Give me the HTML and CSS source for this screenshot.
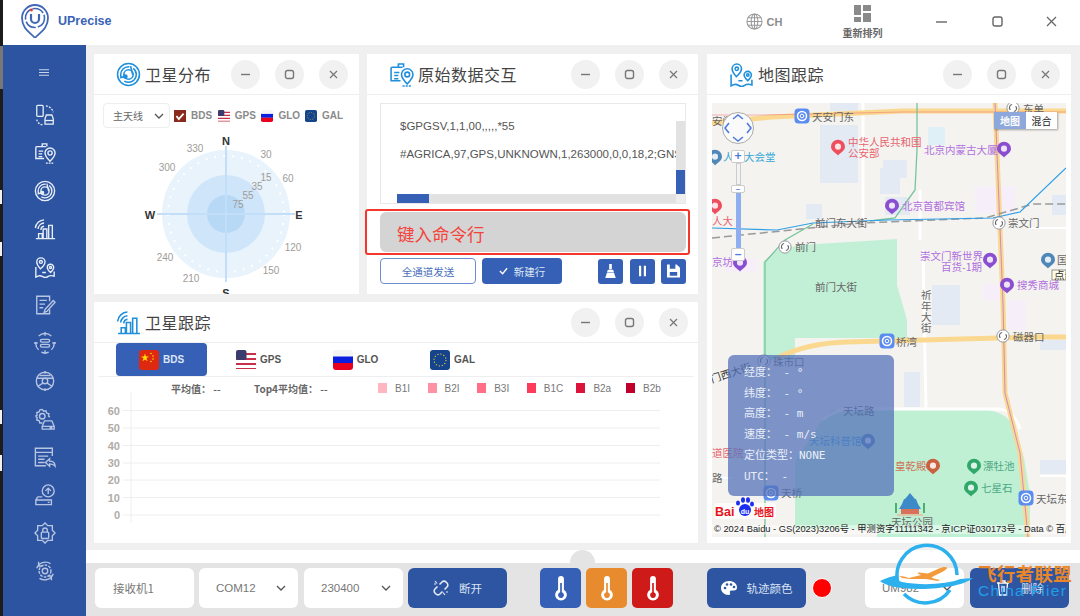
FILE: index.html
```html
<!DOCTYPE html>
<html lang="zh-CN">
<head>
<meta charset="utf-8">
<title>UPrecise</title>
<link rel="stylesheet" href="styles.css">
</head>
<body>
<svg class="defs" width="0" height="0" aria-hidden="true">
  <symbol id="i-car" viewBox="0 0 24 24"><g fill="none" stroke="currentColor" stroke-width="1.4"><rect x="3" y="1.5" width="7" height="12" rx="1"/><path d="M13 2c4 .6 7 3.500 8 7M3 17c.6 3 3 5.500 7 6" stroke-dasharray="2 1.500"/><path d="M12 16l1.500-4h6l1.500 4v6H12z"/><path d="M12 18h9"/></g></symbol>
  <symbol id="i-doc" viewBox="0 0 24 24"><g fill="none" stroke="currentColor" stroke-width="1.5"><path d="M9 5V2h5v3M13 5H3a1 1 0 0 0-1 1v12h9"/><path d="M5 10h5M5 13h4M5 16h4"/><path d="M17.500 21c-3-3-5.500-5.500-5.500-9a5.500 5.500 0 0 1 11 0c0 3.500-2.500 6-5.500 9z"/><circle cx="17.500" cy="12" r="2.300"/><path d="M13 23h9" stroke-dasharray="2 1"/></g></symbol>
  <symbol id="i-radar" viewBox="0 0 24 24"><g fill="none" stroke="currentColor" stroke-width="1.500"><circle cx="12" cy="12" r="10.500"/><circle cx="12" cy="12" r="7.500" stroke-dasharray="16 4"/><circle cx="12" cy="12" r="4.500"/><circle cx="9" cy="14" r="1.500" fill="currentColor"/><path d="M4 15l5-1M14 4l2 8"/></g></symbol>
  <symbol id="i-signal" viewBox="0 0 24 24"><g fill="none" stroke="currentColor" stroke-width="1.500"><path d="M1.500 11A10 10 0 0 1 11 2M4.500 12A7 7 0 0 1 11 5.500M7.500 13A4 4 0 0 1 11 9"/><path d="M5 22v-5h4v5M10 22V12h4v10M16 22V8h4v14M2 22.500h21"/></g></symbol>
  <symbol id="i-map" viewBox="0 0 24 24"><g fill="none" stroke="currentColor" stroke-width="1.500"><path d="M7 14C4.500 11 3 9.500 3 6.500a4.500 4.500 0 0 1 9 0c0 3-1.500 4.500-5 7.500z"/><circle cx="7.500" cy="6.500" r="1.600"/><path d="M18 18c-2-2-3.500-3.500-3.500-5.500a3.500 3.500 0 0 1 7 0c0 2-1.500 3.500-3.500 5.500z"/><circle cx="18" cy="12.500" r="1.200"/><path d="M2 12v11c3-2 5-2 7-.7s4 1.700 6 .2 4-1.500 7-.5V17M9 18h4" /></g></symbol>
  <symbol id="i-edit" viewBox="0 0 24 24"><g fill="none" stroke="currentColor" stroke-width="1.500"><path d="M17 8V2.500H3v19h14V17"/><path d="M6 7h8M6 11h6M6 15h4"/><path d="M12 17l9-10 2 2-9 10-3 1z"/></g></symbol>
  <symbol id="i-target" viewBox="0 0 24 24"><g fill="none" stroke="currentColor" stroke-width="1.500"><path d="M5 4.500A10 10 0 0 1 19 4.500M22 11a10 10 0 0 1-3 8.500M5 19.500A10 10 0 0 1 2 11M8 22a10 10 0 0 0 8 0" /><path d="M12 0v4M12 20v4M0 12h4M20 12h4"/><rect x="7" y="8" width="10" height="3" rx="1.500"/><rect x="7" y="13.500" width="10" height="3" rx="1.500"/></g></symbol>
  <symbol id="i-wheel" viewBox="0 0 24 24"><g fill="none" stroke="currentColor" stroke-width="1.500"><circle cx="12" cy="12" r="9.500"/><circle cx="12" cy="12" r="3"/><path d="M3 9h18M4 18l6-4M20 18l-6-4M12 1v3M12 20v3"/><path d="M6 6h12"/></g></symbol>
  <symbol id="i-gear" viewBox="0 0 24 24"><g fill="none" stroke="currentColor" stroke-width="1.500"><circle cx="9" cy="9" r="3"/><path d="M9 1.500l1.500 2 2.500-.5.800 2.500 2.500.8-.5 2.500 1.500 1.200M1.500 9l2-1.500L3 5l2.500-.8L6.500 2 9 1.500M1.500 9l2 1.500L3 13l2.500.8.8 2.500h3"/><path d="M9 23v-3l2.500-6h8l2.500 6v3zM9 20h13M17 21.500h3"/></g></symbol>
  <symbol id="i-win" viewBox="0 0 24 24"><g fill="none" stroke="currentColor" stroke-width="1.500"><path d="M20 11V2.500H1.500v19H13"/><path d="M1.500 7h18M4.500 11h11M4.500 14.500h7M4.500 18h7"/><path d="M23 22c0-3.500-2.500-5.500-6-5.500V14l-4.500 4 4.500 4v-2.500c2.500 0 4.500.5 6 2.500z"/></g></symbol>
  <symbol id="i-up" viewBox="0 0 24 24"><g fill="none" stroke="currentColor" stroke-width="1.500"><circle cx="15.500" cy="7.500" r="6.500"/><path d="M15.500 11V4.500M12.500 7.500l3-3 3 3"/><path d="M4 14h5M2 17.500l2-3.500M2 17.500h17v5H2zM15 20h2"/></g></symbol>
  <symbol id="i-lock" viewBox="0 0 24 24"><g fill="none" stroke="currentColor" stroke-width="1.500"><path d="M12 1l3 3h5v5l3 3-3 3v5h-5l-3 3-3-3H4v-5l-3-3 3-3V4h5z"/><rect x="8" y="11" width="8" height="7" rx="1"/><path d="M9.500 11V9a2.500 2.500 0 0 1 5 0v2"/></g></symbol>
  <symbol id="i-cycle" viewBox="0 0 24 24"><g fill="none" stroke="currentColor" stroke-width="1.500"><circle cx="12" cy="12" r="3"/><circle cx="12" cy="12" r="6.500" stroke-dasharray="3 1.200"/><path d="M3 9A10 10 0 0 1 18 4M5 2v4.500h4M21 15A10 10 0 0 1 6 20M19 22v-4.500h-4"/></g></symbol>
  <symbol id="f-cn" viewBox="0 0 20 20"><rect width="20" height="20" rx="3" fill="#de2910"/><path d="M6 3.500l1 3h3l-2.500 1.800 1 3L6 9.500l-2.500 1.800 1-3L2 6.500h3z" fill="#ffde00"/><g fill="#ffde00"><circle cx="12" cy="3.500" r=".8"/><circle cx="14" cy="6" r=".8"/><circle cx="14" cy="9" r=".8"/><circle cx="12" cy="11.500" r=".8"/></g></symbol>
  <symbol id="f-us" viewBox="0 0 20 20"><rect width="20" height="20" rx="3" fill="#fff"/><path d="M0 3h20v2H0zM0 8h20v2H0zM0 13h20v2H0zM0 18h20v1H0z" fill="#c8304a"/><rect width="10.500" height="10" rx="2" fill="#3c3b6e"/></symbol>
  <symbol id="f-ru" viewBox="0 0 20 20"><rect width="20" height="20" rx="3" fill="#f4f4f4"/><rect y="6.500" width="20" height="6.500" fill="#0a1ee0"/><path d="M0 13h20v4a3 3 0 0 1-3 3H3a3 3 0 0 1-3-3z" fill="#e8001e"/></symbol>
  <symbol id="f-eu" viewBox="0 0 20 20"><rect width="20" height="20" rx="3" fill="#15438c"/><circle cx="10" cy="10" r="6" fill="none" stroke="#e9c93a" stroke-width="1.100" stroke-dasharray="1.200 1.900"/></symbol>
  <symbol id="f-chk" viewBox="0 0 20 20"><rect width="20" height="20" fill="#8a2a1f"/><path d="M4 10l4 5 8-9" fill="none" stroke="#fff" stroke-width="3"/></symbol>
  <symbol id="pin" viewBox="0 0 16 18"><path d="M8 18C6 15 0 13 0 8a8 8 0 0 1 16 0c0 5-6 7-8 10z" fill="currentColor"/><circle cx="8" cy="8" r="3.500" fill="#fff" fill-opacity=".85"/></symbol>
  <symbol id="sub" viewBox="0 0 16 16"><rect x=".5" y=".5" width="15" height="15" rx="4" fill="#5b8cf0"/><circle cx="8" cy="8" r="4.500" fill="none" stroke="#fff" stroke-width="1.500"/><circle cx="8" cy="8" r="1.800" fill="none" stroke="#fff"/></symbol>
  <symbol id="ring" viewBox="0 0 16 16"><circle cx="8" cy="8" r="7" fill="#fff" stroke="#8b8f98"/><path d="M5 10a3.500 3.500 0 0 1 2-6M11 6a3.500 3.500 0 0 1-2 6" fill="none" stroke="#666" stroke-width="1.300"/></symbol>
  <symbol id="therm" viewBox="0 0 24 32"><path d="M8.500 18V5a3.500 3.500 0 0 1 7 0v13a7 7 0 1 1-7 0z" fill="#fff"/><path d="M11 10h2v11a3.500 3.500 0 1 1-2 0z" fill="currentColor"/></symbol>
</svg>

<div class="edge">
  <span class="edge-grey"></span>
  <span class="edge-mark m1"></span>
  <span class="edge-mark m2"></span>
  <span class="edge-mark m3"></span>
  <span class="edge-mark m4"></span>
</div>

<div class="app">
  <header class="topbar">
    <svg class="logo" viewBox="0 0 28 34"><path d="M14 34C10 29 1 25 1 14a13 13 0 0 1 26 0c0 11-9 15-13 20z" fill="#fff" stroke="#3f68b8" stroke-width="1.800"/><circle cx="14" cy="14" r="9.500" fill="none" stroke="#3f68b8" stroke-width="1.600" stroke-dasharray="12 2"/><path d="M10 10v5a4 4 0 0 0 8 0v-5" fill="none" stroke="#3f68b8" stroke-width="2.200"/><circle cx="10.500" cy="6" r="1.400" fill="#e8342c"/></svg>
    <span class="brand">UPrecise</span>
    <svg class="globe" viewBox="0 0 18 18"><g fill="none" stroke="#999" stroke-width="1.100"><circle cx="9" cy="9" r="8"/><ellipse cx="9" cy="9" rx="3.500" ry="8"/><path d="M1 9h16M2 5h14M2 13h14M9 1v16"/></g></svg>
    <span class="lang">CH</span>
    <div class="arrange">
      <svg class="arrange-icon" viewBox="0 0 17 17"><path d="M0 0h7v10H0zM9 0h8v6H9zM0 12h7v5H0zM9 8h8v9H9z" fill="#8a8a8a"/></svg>
      <span class="arrange-text">重新排列</span>
    </div>
    <svg class="win win-min" viewBox="0 0 11 11"><path d="M0 6h11" stroke="#666" stroke-width="1.400"/></svg>
    <svg class="win win-max" viewBox="0 0 11 11"><rect x="1" y="1" width="9" height="9" rx="2" fill="none" stroke="#666" stroke-width="1.400"/></svg>
    <svg class="win win-close" viewBox="0 0 11 11"><path d="M1 1l9 9M10 1l-9 9" stroke="#666" stroke-width="1.300"/></svg>
  </header>

  <div class="body">
    <nav class="sidebar">
      <svg class="burger" viewBox="0 0 10 7"><path d="M0 .7h10M0 3.500h10M0 6.300h10" stroke="#c8d4ea" stroke-width="1.100"/></svg>
      <div class="nav-list">
        <svg class="nav-i"><use href="#i-car"/></svg>
        <svg class="nav-i"><use href="#i-doc"/></svg>
        <svg class="nav-i"><use href="#i-radar"/></svg>
        <svg class="nav-i"><use href="#i-signal"/></svg>
        <svg class="nav-i"><use href="#i-map"/></svg>
        <svg class="nav-i dim"><use href="#i-edit"/></svg>
        <svg class="nav-i dim"><use href="#i-target"/></svg>
        <svg class="nav-i dim"><use href="#i-wheel"/></svg>
        <svg class="nav-i dim"><use href="#i-gear"/></svg>
        <svg class="nav-i dim"><use href="#i-win"/></svg>
        <svg class="nav-i dim"><use href="#i-up"/></svg>
        <svg class="nav-i dim"><use href="#i-lock"/></svg>
        <svg class="nav-i dim"><use href="#i-cycle"/></svg>
      </div>
    </nav>

    <main class="content">
      <div class="grid">
        <section class="panel">
          <div class="panel-head">
            <svg class="title-icon"><use href="#i-radar"/></svg>
            <h2 class="title">卫星分布</h2>
            <div class="round-group">
              <button class="round"><svg viewBox="0 0 11 11"><path d="M1 5.500h9" stroke="#777" stroke-width="1.400"/></svg></button>
              <button class="round"><svg viewBox="0 0 11 11"><rect x="1.500" y="1.500" width="8" height="8" rx="2" fill="none" stroke="#777" stroke-width="1.400"/></svg></button>
              <button class="round"><svg viewBox="0 0 11 11"><path d="M2 2l7 7M9 2l-7 7" stroke="#777" stroke-width="1.200"/></svg></button>
            </div>
          </div>
          <div class="sky-tools">
            <div class="ant-select"><span>主天线</span><svg class="chev" viewBox="0 0 10 6"><path d="M1 1l4 4 4-4" fill="none" stroke="#555" stroke-width="1.300"/></svg></div>
            <svg class="mini-flag"><use href="#f-chk"/></svg><span class="mini-label">BDS</span>
            <svg class="mini-flag"><use href="#f-us"/></svg><span class="mini-label">GPS</span>
            <svg class="mini-flag"><use href="#f-ru"/></svg><span class="mini-label">GLO</span>
            <svg class="mini-flag"><use href="#f-eu"/></svg><span class="mini-label">GAL</span>
          </div>
          <svg class="sky" viewBox="94 130 265 164">
            <circle cx="226" cy="214" r="64" fill="#e8f3fc"/>
            <circle cx="226" cy="214" r="58" fill="none" stroke="#fff" stroke-width="2" stroke-dasharray="2 7"/>
            <circle cx="226" cy="214" r="39" fill="#cfe5fa"/>
            <circle cx="226" cy="214" r="19" fill="#b8d9f6"/>
            <path d="M226 146v136M157 214h138" stroke="#c2def9" stroke-width="2"/>
            <g class="sky-num">
              <text x="195" y="152">330</text><text x="266" y="158">30</text><text x="167" y="171">300</text><text x="288" y="182">60</text>
              <text x="266" y="181">15</text><text x="257" y="190">35</text><text x="248" y="199">55</text><text x="238" y="208">75</text>
              <text x="293" y="251">120</text><text x="271" y="274">150</text><text x="165" y="261">240</text><text x="191" y="282">210</text>
            </g>
            <g class="sky-dir">
              <text x="226" y="145">N</text><text x="150" y="219">W</text><text x="299" y="219">E</text><text x="226" y="297">S</text>
            </g>
          </svg>
        </section>

        <section class="panel raw-panel">
          <div class="panel-head">
            <svg class="title-icon"><use href="#i-doc"/></svg>
            <h2 class="title">原始数据交互</h2>
            <div class="round-group tight">
              <button class="round"><svg viewBox="0 0 11 11"><path d="M1 5.500h9" stroke="#777" stroke-width="1.400"/></svg></button>
              <button class="round"><svg viewBox="0 0 11 11"><rect x="1.500" y="1.500" width="8" height="8" rx="2" fill="none" stroke="#777" stroke-width="1.400"/></svg></button>
              <button class="round"><svg viewBox="0 0 11 11"><path d="M2 2l7 7M9 2l-7 7" stroke="#777" stroke-width="1.200"/></svg></button>
            </div>
          </div>
          <div class="raw-body">
            <div class="raw-log">
              <p class="raw-line">$GPGSV,1,1,00,,,,,*55</p>
              <p class="raw-line">#AGRICA,97,GPS,UNKNOWN,1,263000,0,0,18,2;GNSS,SINGLE</p>
              <div class="vbar"><span class="vthumb"></span></div>
              <div class="hbar"><span class="hthumb"></span></div>
              <span class="bar-corner"></span>
            </div>
            <div class="cmd">
              <span class="cmd-text">键入命令行</span>
              <span class="cmd-mark"></span>
            </div>
            <div class="raw-actions">
              <button class="btn-outline">全通道发送</button>
              <button class="btn-fill"><svg viewBox="0 0 10 8"><path d="M1 4l3 3 5-6" fill="none" stroke="#fff" stroke-width="1.500"/></svg>新建行</button>
              <div class="icon-btns">
                <button class="btn-ic"><svg viewBox="0 0 14 16"><path d="M5.500 0h3v6h-3zM4 6.500h6l1 3H3zM3 10h8l2 6H1z" fill="#fff"/></svg></button>
                <button class="btn-ic"><svg viewBox="0 0 14 16"><path d="M3 2h2.500v12H3zM8.500 2H11v12H8.500z" fill="#fff"/></svg></button>
                <button class="btn-ic"><svg viewBox="0 0 14 14"><path d="M0 0h10.500L14 3.500V14H0zM3 0v4.500h6V0zM3 8v4h8V8z" fill="#fff"/></svg></button>
              </div>
            </div>
          </div>
        </section>

        <section class="panel map-panel">
          <div class="panel-head">
            <svg class="title-icon"><use href="#i-map"/></svg>
            <h2 class="title">地图跟踪</h2>
            <div class="round-group">
              <button class="round"><svg viewBox="0 0 11 11"><path d="M1 5.500h9" stroke="#777" stroke-width="1.400"/></svg></button>
              <button class="round"><svg viewBox="0 0 11 11"><rect x="1.500" y="1.500" width="8" height="8" rx="2" fill="none" stroke="#777" stroke-width="1.400"/></svg></button>
              <button class="round"><svg viewBox="0 0 11 11"><path d="M2 2l7 7M9 2l-7 7" stroke="#777" stroke-width="1.200"/></svg></button>
            </div>
          </div>
          <div class="map">
            <svg class="map-svg" viewBox="712 103 354 434">
              <rect x="712" y="103" width="354" height="434" fill="#f4f3f0"/>
              <g fill="#e3eaf3">
                <rect x="820" y="125" width="38" height="58"/><rect x="883" y="160" width="24" height="18"/><path d="M880 168h20v26h-20z"/><rect x="928" y="127" width="17" height="18" fill="#dff0f6"/>
                <rect x="806" y="204" width="16" height="15"/><rect x="885" y="197" width="25" height="18"/><rect x="1052" y="195" width="14" height="20"/><rect x="932" y="285" width="28" height="40"/>
                <rect x="904" y="372" width="16" height="35"/><rect x="1040" y="460" width="26" height="14"/><rect x="1040" y="340" width="26" height="10"/>
                <rect x="830" y="103" width="28" height="8"/>
              </g>
              <g fill="#f6eef8">
                <rect x="975" y="186" width="40" height="28"/><rect x="983" y="284" width="20" height="16"/><rect x="1008" y="300" width="18" height="30"/><rect x="725" y="258" width="32" height="14"/>
              </g>
              <path d="M763 262l14-12 24-5 96-6v46l10 35v18H795v22h-32z" fill="#c2f0d6"/>
              <path d="M822 420l10-10h150q24 0 32 18l10 30 6 36v43H877v-8h-82v-68z" fill="#bff0d3"/>
              <g fill="none" stroke="#fff" stroke-linejoin="round">
                <path d="M863 103v117M920 190v50M923 250l3 160" stroke-width="3"/>
                <path d="M925 409h75q14 2 20 20M822 420q14-11 28-11h75" stroke-width="3"/>
                <path d="M1040 476h26M712 478h20" stroke-width="2"/><path d="M1030 228h36" stroke-width="2"/>
              </g>
              <g fill="none" stroke="#fad890" stroke-width="5" stroke-linejoin="round">
                <path d="M712 123l60-6 130-6h164" /><path d="M777 358q30-15 70-16l190-5h29"/>
                <path d="M995 103l8 200 2 90 15 60 8 84"/>
              </g>
              <path d="M995 103l8 200 2 90 15 60 8 84" fill="none" stroke="#cc8cc4" stroke-width="1"/>
              <path d="M712 115l50 0 140-3h164" fill="none" stroke="#ef6f6f" stroke-width="1" stroke-opacity=".5"/>
              <path d="M917 103v47l-2 40-20 28-25 3M813 224l-28 16-20 22v275" fill="none" stroke="#78c49c" stroke-width="1.300"/>
              <path d="M712 238l148-15 125-5 48-14h33" fill="none" stroke="#9a9a9a" stroke-width="1.500" stroke-dasharray="8 4"/>
              <path d="M712 228l65 2 36-7 74-3 106-2 27-6 46-44" fill="none" stroke="#2f9fe6" stroke-width="1.200"/>

              <g class="pin-red"><use href="#pin" x="831" y="139" width="14" height="17"/><use href="#pin" x="708" y="198" width="14" height="17"/></g>
              <g class="pin-purple"><use href="#pin" x="997" y="141" width="14" height="17"/><use href="#pin" x="885" y="198" width="14" height="17"/><use href="#pin" x="733" y="255" width="14" height="17"/><use href="#pin" x="983" y="252" width="14" height="17"/><use href="#pin" x="1000" y="277" width="14" height="17"/></g>
              <g class="pin-blue"><use href="#pin" x="708" y="149" width="14" height="17"/><use href="#pin" x="1041" y="252" width="14" height="17"/><use href="#pin" x="861" y="433" width="14" height="17"/></g>
              <g class="pin-brown"><use href="#pin" x="926" y="458" width="14" height="17"/></g>
              <g class="pin-green"><use href="#pin" x="967" y="458" width="14" height="17"/><use href="#pin" x="964" y="480" width="14" height="17"/></g>

              <use href="#sub" x="794" y="108" width="16" height="16"/><use href="#sub" x="879" y="333" width="16" height="16"/><use href="#sub" x="763" y="485" width="16" height="16"/><use href="#sub" x="1018" y="490" width="16" height="16"/>
              <use href="#ring" x="1006" y="101" width="14" height="14"/><use href="#ring" x="992" y="216" width="14" height="14"/><use href="#ring" x="778" y="240" width="14" height="14"/><use href="#ring" x="996" y="329" width="14" height="14"/><use href="#ring" x="757" y="354" width="14" height="14"/>

              <g class="mt mt-grey">
                <text x="812" y="121">天安门东</text><text x="712" y="125">安门</text><text x="1023" y="113">东单</text>
                <text x="815" y="227">前门东大街</text><text x="1008" y="227">崇文门</text><text x="795" y="251">前门</text><text x="1057" y="264">国</text>
                <text x="815" y="291">前门大街</text><text x="921" y="299">祈</text><text x="921" y="310">年</text><text x="921" y="321">大</text><text x="921" y="332">街</text>
                <text x="896" y="346">桥湾</text><text x="1013" y="341">磁器口</text><text x="773" y="366">珠市口</text>
                <text x="843" y="415">天坛路</text><text x="712" y="482">路</text><text x="781" y="497">天桥</text><text x="1036" y="503">天坛东</text>
                <text x="891" y="526">天坛公园</text>
              </g>
              <g class="mt mt-red"><text x="848" y="146">中华人民共和国</text><text x="848" y="157">公安部</text><text x="712" y="225">人大</text><text x="712" y="457">道医院</text></g>
              <g class="mt mt-purple"><text x="924" y="154">北京内蒙古大厦</text><text x="902" y="210">北京首都宾馆</text><text x="920" y="260">崇文门新世界</text><text x="941" y="271">百货-1期</text><text x="712" y="266">京坊</text><text x="1017" y="289">搜秀商城</text></g>
              <g class="mt mt-teal"><text x="723" y="161">人</text><text x="744" y="161">大会堂</text><text x="809" y="445">天坛科普馆</text></g>
              <g class="mt mt-brown"><text x="895" y="470">皇乾殿</text></g>
              <g class="mt mt-green"><text x="983" y="470">漂牡池</text><text x="981" y="492">七星石</text></g>
              <text class="mt mt-dark" transform="translate(712 383) rotate(-18)">门西大街</text>

              <g>
                <path d="M899 509h22l-3-5h-16zM902 504h16l-2-5h-12zM905 499h10l-5-6z" fill="#3d8ac8"/><rect x="901" y="509" width="18" height="5" fill="#d8705a"/><rect x="897" y="514" width="26" height="2" fill="#d9c9a8"/><path d="M896 503v10M924 503v10" stroke="#4cb06c" stroke-width="2"/>
              </g>

              <rect x="1052" y="270" width="14" height="10" fill="#fffde8" stroke="#555" stroke-width=".6"/><text class="mt mt-dark" x="1054" y="279">点击</text>

              <g class="map-logo">
                <rect x="714" y="503" width="62" height="16" rx="3" fill="#fff" fill-opacity=".75"/>
                <text class="logo-bai" x="715" y="516">Bai</text>
                <circle cx="745" cy="510" r="6" fill="#1c2ff0"/><g fill="#1c2ff0"><ellipse cx="738" cy="503" rx="2" ry="2.500"/><ellipse cx="743" cy="500" rx="2" ry="2.800"/><ellipse cx="748" cy="500" rx="2" ry="2.800"/><ellipse cx="752" cy="504" rx="2" ry="2.500"/></g>
                <text class="logo-du" x="745" y="514">du</text>
                <text class="logo-map" x="754" y="516">地图</text>
              </g>
              <rect x="712" y="525" width="354" height="9" fill="#fff" fill-opacity=".45"/>
              <text class="map-copy" x="714" y="532">© 2024 Baidu - GS(2023)3206号 - 甲测资字11111342 - 京ICP证030173号 - Data © 百度</text>
            </svg>

            <div class="pan"><svg viewBox="0 0 32 32"><circle cx="16" cy="16" r="15.500" fill="#fafafa" stroke="#aaa"/><path d="M11 7l5-4 5 4M11 25l5 4 5-4M7 11l-4 5 4 5M25 11l4 5-4 5" fill="none" stroke="#4f7bdc" stroke-width="1.600"/></svg></div>
            <div class="zoom-ctl">
              <span class="zoom-btn">+</span>
              <span class="zoom-rail"></span>
              <span class="zoom-knob">–</span>
              <span class="zoom-fill"></span>
              <span class="zoom-btn">–</span>
            </div>
            <div class="map-type"><span class="mt-on">地图</span><span class="mt-off">混合</span></div>
            <div class="pos">
              <p>经度： - °</p>
              <p>纬度： - °</p>
              <p>高度： - m</p>
              <p>速度： - m/s</p>
              <p>定位类型：NONE</p>
              <p>UTC： -</p>
            </div>
          </div>
        </section>

        <section class="panel track">
          <div class="panel-head">
            <svg class="title-icon"><use href="#i-signal"/></svg>
            <h2 class="title">卫星跟踪</h2>
            <div class="round-group tight">
              <button class="round"><svg viewBox="0 0 11 11"><path d="M1 5.500h9" stroke="#777" stroke-width="1.400"/></svg></button>
              <button class="round"><svg viewBox="0 0 11 11"><rect x="1.500" y="1.500" width="8" height="8" rx="2" fill="none" stroke="#777" stroke-width="1.400"/></svg></button>
              <button class="round"><svg viewBox="0 0 11 11"><path d="M2 2l7 7M9 2l-7 7" stroke="#777" stroke-width="1.200"/></svg></button>
            </div>
          </div>
          <div class="tabs">
            <div class="tab on"><svg class="tab-flag"><use href="#f-cn"/></svg>BDS</div>
            <div class="tab"><svg class="tab-flag"><use href="#f-us"/></svg>GPS</div>
            <div class="tab"><svg class="tab-flag"><use href="#f-ru"/></svg>GLO</div>
            <div class="tab"><svg class="tab-flag"><use href="#f-eu"/></svg>GAL</div>
          </div>
          <div class="stats">
            <span class="avg">平均值： --</span>
            <span class="top4">Top4平均值： --</span>
            <div class="legend">
              <span class="lg"><i class="sw s1"></i>B1I</span>
              <span class="lg"><i class="sw s2"></i>B2I</span>
              <span class="lg"><i class="sw s3"></i>B3I</span>
              <span class="lg"><i class="sw s4"></i>B1C</span>
              <span class="lg"><i class="sw s5"></i>B2a</span>
              <span class="lg"><i class="sw s6"></i>B2b</span>
            </div>
          </div>
          <svg class="chart" viewBox="94 400 604 143">
            <path d="M131 393v131" stroke="#eee"/>
            <path d="M123 411.500h537M123 429h537M123 446.500h537M123 464h537M123 481h537M123 498.500h537M123 516h537" stroke="#eee"/>
            <g class="axis-num">
              <text x="120" y="416">60</text><text x="120" y="433">50</text><text x="120" y="451">40</text><text x="120" y="468">30</text><text x="120" y="485">20</text><text x="120" y="503">10</text><text x="120" y="520">0</text>
            </g>
          </svg>
        </section>
      </div>

      <div class="strip"><span class="dome"></span></div>

      <footer class="bottom">
        <div class="field f-name">接收机1</div>
        <div class="field f-sel">COM12<svg class="chev" viewBox="0 0 10 6"><path d="M1 1l4 4 4-4" fill="none" stroke="#555" stroke-width="1.300"/></svg></div>
        <div class="field f-sel f-baud">230400<svg class="chev" viewBox="0 0 10 6"><path d="M1 1l4 4 4-4" fill="none" stroke="#555" stroke-width="1.300"/></svg></div>
        <button class="act act-link"><svg viewBox="0 0 16 16"><path d="M6.500 4.500L9 2a2.800 2.800 0 0 1 4 0l1 1a2.800 2.800 0 0 1 0 4l-2.500 2.500M9.500 11.500L7 14a2.800 2.800 0 0 1-4 0l-1-1a2.800 2.800 0 0 1 0-4l2.500-2.500" fill="none" stroke="#e4eaf6" stroke-width="1.600"/><path d="M2 1l2 2.500M1 4h2M12 15l-2-2.500M15 12h-2" stroke="#e4eaf6" stroke-width="1.200"/></svg>断开</button>
        <div class="therms">
          <button class="th th-b"><svg><use href="#therm"/></svg></button>
          <button class="th th-o"><svg><use href="#therm"/></svg></button>
          <button class="th th-r"><svg><use href="#therm"/></svg></button>
        </div>
        <button class="act act-color"><svg viewBox="0 0 16 16"><path d="M8 1C3.500 1 0 4 0 8s3.500 7 7.500 7c1.500 0 2-1 1.500-2-.6-1.300 0-2.500 1.500-2.500H13c1.800 0 3-1.200 3-3C16 3.500 12.500 1 8 1z" fill="#fff"/><g fill="#2e55a2"><circle cx="4" cy="8" r="1.300"/><circle cx="6" cy="4.500" r="1.300"/><circle cx="10" cy="4.500" r="1.300"/><circle cx="13" cy="7" r="1.300"/></g></svg>轨迹颜色</button>
        <span class="dot"></span>
        <div class="field f-sel f-um">UM982<svg class="chev" viewBox="0 0 10 6"><path d="M1 1l4 4 4-4" fill="none" stroke="#555" stroke-width="1.300"/></svg></div>
        <button class="act act-del"><svg viewBox="0 0 14 16"><path d="M1 3h12M5 3V1h4v2M2.500 3l1 12h7l1-12M6 6v6M8 6v6" fill="none" stroke="#fff" stroke-width="1.300"/></svg>删除</button>
      </footer>
    </main>
  </div>
</div>

<svg class="watermark" viewBox="876 543 204 66">
  <path d="M898 583a30 30 0 1 1 59-8" fill="none" stroke="#2db0ee" stroke-width="3.500"/>
  <path d="M904 594a30 30 0 0 0 46-4" fill="none" stroke="#2db0ee" stroke-width="3.500"/>
  <path d="M880 581c6-3 12-5 19-6-4 3-4 5 3 7 20 4 46 2 58-3l13-1c-8 7-32 11-52 11-20 0-36-3-41-8z" fill="#2db0ee"/>
  <path d="M899 576l5 .5 5 1.500 12-3-4-2 2-.5 9 1 11-5c3-1.500 7-2 8-1 .5 1-2 3-5 4.500l-10 5 0 1 8 2-2 1-12-2-16 0-8-1z" fill="#f39a3a"/>
  <text class="wm-cn" x="978" y="581">飞行者联盟</text>
  <text class="wm-en" x="978" y="596">China Flier</text>
</svg>
</body>
</html>
```
FILE: styles.css
```css
* { box-sizing: border-box; }
html, body { margin: 0; padding: 0; }
body {
  width: 1080px;
  height: 616px;
  overflow: hidden;
  display: flex;
  position: relative;
  background: #f0f0f0;
  font-family: "Noto Sans CJK SC", "Liberation Sans", sans-serif;
  color: #555;
}
.defs { position: absolute; }
p, h2 { margin: 0; }
button { border: 0; padding: 0; font: inherit; cursor: pointer; }

.edge { width: 3px; background: #1c1c1c; position: relative; flex: none; }
.edge-grey { position: absolute; left: 0; top: 46px; width: 3px; height: 43px; background: #777; }
.edge-mark { position: absolute; left: 0; width: 2px; background: #f0f0f0; }
.m1 { top: 190px; height: 14px; }
.m2 { top: 242px; height: 14px; }
.m3 { top: 410px; height: 14px; }
.m4 { top: 455px; height: 16px; }

.app { flex: 1; display: flex; flex-direction: column; min-width: 0; }

.topbar { height: 45px; background: #fff; display: flex; align-items: center; flex: none; }
.logo { width: 28px; height: 34px; margin-left: 18px; margin-top: -3px; }
.brand { margin-left: 9px; margin-top: -4px; font: bold 12.5px "Liberation Sans", sans-serif; color: #3a63b8; }
.globe { width: 17px; height: 17px; margin-left: 634px; margin-top: -2px; }
.lang { margin-left: 4px; margin-top: -2px; font: bold 11px "Liberation Sans", sans-serif; color: #8c8c8c; width: 18px; }
.arrange { margin-left: 56px; width: 44px; align-self: flex-start; margin-top: 5px; display: flex; flex-direction: column; align-items: center; }
.arrange-icon { width: 17px; height: 17px; }
.arrange-text { font-size: 10px; line-height: 14px; font-weight: 700; color: #666; margin-top: 4px; white-space: nowrap; }
.win { width: 11px; height: 11px; flex: none; margin-top: -2px; }
.win-min { margin-left: 51px; }
.win-max { margin-left: 45px; }
.win-close { margin-left: 43px; }

.body { flex: 1; display: flex; min-height: 0; }

.sidebar { width: 83px; background: #2d54a0; flex: none; display: flex; flex-direction: column; align-items: center; }
.burger { width: 10px; height: 7px; margin-top: 24px; margin-left: -1px; }
.nav-list { display: flex; flex-direction: column; align-items: center; margin-top: 28px; gap: 16px; }
.nav-i { width: 22px; height: 22px; color: #e8eef8; }
.nav-i.dim { color: #b7c5e3; }

.content { flex: 1; display: flex; flex-direction: column; min-width: 0; }
.grid {
  display: grid;
  grid-template-columns: 265px 331px 364px;
  grid-template-rows: 240px 241px;
  column-gap: 8px;
  row-gap: 8px;
  padding: 9px 0 7px 8px;
  flex: none;
}
.panel { background: #fff; min-width: 0; min-height: 0; overflow: hidden; display: flex; flex-direction: column; }
.raw-panel { overflow: visible; }
.track { grid-column: 1 / span 2; grid-row: 2; }
.panel-head { height: 41px; border-bottom: 1px solid #eee; display: flex; align-items: center; padding-left: 22px; flex: none; }
.title-icon { width: 25px; height: 25px; color: #1f8fdc; flex: none; }
.title { font-size: 16px; font-weight: 400; color: #444; margin-left: 4px; white-space: nowrap; letter-spacing: .5px; }
.round-group { margin-left: auto; display: flex; gap: 15px; padding-right: 11px; }
.round-group.tight { padding-right: 10px; }
.round { width: 29px; height: 29px; border-radius: 50%; background: #f1f1f1; display: flex; align-items: center; justify-content: center; }
.round svg { width: 11px; height: 11px; }

.sky-tools { display: flex; align-items: center; height: 25px; margin: 8px 0 2px 9px; flex: none; }
.ant-select { width: 67px; height: 25px; border: 1px solid #eee; border-radius: 4px; display: flex; align-items: center; padding: 0 5px 0 9px; font-size: 10px; color: #666; justify-content: space-between; }
.ant-select .chev { width: 10px; height: 6px; }
.mini-flag { width: 12px; height: 12px; margin-left: 4px; flex: none; }
.mini-label { font: bold 10px "Liberation Sans", sans-serif; color: #8a8a8a; margin-left: 5px; width: 22px; margin-right: .7px; }
.sky { width: 265px; height: 164px; display: block; flex: none; }
.sky-num text { font: 10px "Liberation Sans", sans-serif; fill: #a09c98; text-anchor: middle; }
.sky-dir text { font: bold 11px "Liberation Sans", sans-serif; fill: #333; text-anchor: middle; }

.raw-body { padding: 8px 12px 0 13px; display: flex; flex-direction: column; gap: 6px; flex: 1; }
.raw-log { height: 101px; border: 1px solid #e8e8e8; position: relative; overflow: hidden; padding: 8px 0 0 19px; margin-bottom: 2px; flex: none; }
.raw-line { font: 11.5px/28px "Liberation Sans", sans-serif; color: #555; white-space: nowrap; width: 277px; overflow: hidden; }
.vbar { position: absolute; right: 0; top: 17px; bottom: 8px; width: 9px; background: #e2e2e2; display: flex; align-items: flex-end; }
.vthumb { width: 9px; height: 25px; background: #3560b5; }
.hbar { position: absolute; left: 16px; right: 9px; bottom: 0; height: 9px; background: #e2e2e2; }
.hthumb { display: block; width: 32px; height: 9px; background: #3560b5; }
.bar-corner { position: absolute; right: 0; bottom: 0; width: 9px; height: 9px; background: #eee; }
.cmd { height: 40px; background: #d4d4d4; border-radius: 6px; position: relative; display: flex; align-items: center; padding: 2px 0 0 17px; flex: none; }
.cmd-text { font-size: 17.5px; color: #f4433a; }
.cmd-mark { position: absolute; left: -15px; right: -4px; top: -3px; bottom: -3px; border: 2px solid #f5362b; border-radius: 3px; }
.raw-actions { display: flex; align-items: center; height: 26px; flex: none; }
.btn-outline { width: 96px; height: 26px; background: #fff; border: 1px solid #6d8fd0; border-radius: 4px; color: #4a70bd; font-size: 10.5px; }
.btn-fill { width: 80px; height: 26px; margin-left: 6px; background: #3560b5; border-radius: 4px; color: #dfe7f6; font-size: 10.5px; display: flex; align-items: center; justify-content: center; gap: 6px; }
.btn-fill svg { width: 9px; height: 8px; }
.icon-btns { margin-left: auto; display: flex; gap: 6.500px; }
.btn-ic { width: 25px; height: 25px; background: #3560b5; border-radius: 3px; display: flex; align-items: center; justify-content: center; }
.btn-ic svg { width: 13px; height: 14px; }

.map-panel { grid-row: 1 / span 2; grid-column: 3; margin-left: 1px; width: 364px; }
.map { position: relative; height: 434px; margin: 8px 5px 0; overflow: hidden; flex: none; }
.map-svg { display: block; width: 354px; height: 434px; }
.mt { font-size: 10.5px; }
.mt-grey { fill: #666; }
.mt-red { fill: #e8636e; }
.mt-purple { fill: #b070dd; }
.mt-teal { fill: #35a6d8; }
.mt-brown { fill: #cf7058; }
.mt-green { fill: #4aa684; }
.mt-dark { fill: #333; }
.pin-red { color: #ee4f5d; }
.pin-purple { color: #8a4fd0; }
.pin-blue { color: #4f87b8; }
.pin-brown { color: #c9603f; }
.pin-green { color: #2fa86a; }
.logo-bai { font: bold 12.5px "Liberation Sans", sans-serif; fill: #e8141c; }
.logo-du { font: bold 7px "Liberation Sans", sans-serif; fill: #fff; text-anchor: middle; }
.logo-map { font-size: 10px; font-weight: 700; fill: #e8141c; }
.map-copy { font: 9.3px "Liberation Sans", "Noto Sans CJK SC", sans-serif; fill: #222; }

.pan { position: absolute; left: 10px; top: 9px; width: 32px; height: 32px; }
.pan svg { display: block; width: 32px; height: 32px; }
.zoom-ctl { position: absolute; left: 19px; top: 47px; width: 14px; display: flex; flex-direction: column; align-items: center; }
.zoom-btn { width: 14px; height: 13px; background: #fff; border: 1px solid #ccc; border-radius: 2px; color: #4f7bdc; font: bold 12px/10px "Liberation Sans", sans-serif; text-align: center; }
.zoom-rail { width: 5px; height: 22px; background: #f2f2f2; border: 1px solid #ccc; }
.zoom-knob { width: 14px; height: 8px; background: #fff; border: 1px solid #ccc; border-radius: 2px; color: #4f7bdc; font: bold 8px/5px "Liberation Sans", sans-serif; text-align: center; }
.zoom-fill { width: 5px; height: 55px; background: #8eaef0; }
.map-type { position: absolute; left: 282px; top: 9px; display: flex; box-shadow: 1px 1px 2px rgba(0,0,0,.35); font-size: 10px; line-height: 17px; }
.mt-on { width: 32px; background: #8ea8dc; color: #fff; text-align: center; font-weight: 700; }
.mt-off { width: 31px; background: #fff; color: #222; text-align: center; }
.pos { position: absolute; left: 16px; top: 252px; width: 166px; height: 141px; padding: 8px 0 0 16px; background: rgba(84,113,185,.74); border-radius: 6px; color: #e9eef8; font: 11px/20.700px "DejaVu Sans Mono", "Noto Sans CJK SC", monospace; }

.tabs { display: flex; gap: 6px; height: 34px; margin: 0 5px; padding: 0 0 0 17px; border-bottom: 1px solid #eee; flex: none; }
.tab { width: 91px; height: 33px; display: flex; align-items: center; justify-content: center; gap: 4px; border-radius: 4px; font: bold 10px "Liberation Sans", sans-serif; color: #555; }
.tab.on { background: #3560b5; color: #dde6f6; }
.tab-flag { width: 20px; height: 20px; }
.stats { height: 22px; display: flex; align-items: center; font-size: 10px; font-weight: 700; color: #666; padding-left: 77px; flex: none; }
.avg { width: 83px; white-space: nowrap; }
.top4 { width: 124px; white-space: nowrap; }
.legend { display: flex; font: 10px "Liberation Sans", sans-serif; color: #777; }
.lg { width: 49.600px; display: flex; align-items: center; gap: 8px; white-space: nowrap; }
.sw { width: 9px; height: 10px; display: block; flex: none; }
.s1 { background: #ffb6c1; }
.s2 { background: #ff91a4; }
.s3 { background: #ff6f88; }
.s4 { background: #ff3b5c; }
.s5 { background: #dc143c; }
.s6 { background: #c0002a; }
.chart { width: 604px; height: 143px; display: block; overflow: visible; flex: none; }
.axis-num text { font: bold 11px "Liberation Sans", sans-serif; fill: #b0aca8; text-anchor: end; }

.strip { height: 13px; background: #fff; display: flex; justify-content: center; align-items: flex-end; flex: none; margin-top: 0; }
.dome { width: 25px; height: 13px; background: #e4e4e4; border-radius: 13px 13px 0 0; margin-left: -2px; }

.bottom { flex: 1; background: #e4e4e4; display: flex; align-items: flex-start; padding: 5px 0 0 9px; }
.field { width: 99px; height: 40px; background: #fff; border-radius: 6px; display: flex; align-items: center; font-size: 11.5px; color: #777; flex: none; }
.f-name { padding-left: 18px; }
.f-sel { margin-left: 5px; padding: 0 12px 0 17px; justify-content: space-between; font-family: "Liberation Sans", "Noto Sans CJK SC", sans-serif; }
.f-baud { margin-left: 6px; }
.f-um { margin-left: 33px; }
.chev { width: 10px; height: 6px; flex: none; }
.act { width: 99px; height: 40px; background: #2e55a2; border-radius: 6px; color: #dbe3f3; font-size: 11.5px; display: flex; align-items: center; justify-content: center; gap: 10px; flex: none; }
.act svg { width: 16px; height: 16px; }
.act-link { margin-left: 5px; }
.act-color { margin-left: 0; }
.act-del { margin-left: 6px; }
.therms { display: flex; gap: 5px; margin-left: 33px; margin-right: 34px; flex: none; }
.th { width: 41px; height: 40px; border-radius: 5px; display: flex; align-items: center; justify-content: center; }
.th svg { width: 20px; height: 28px; }
.th-b { background: #3560b5; color: #3560b5; }
.th-o { background: #e88b2e; color: #e88b2e; }
.th-r { background: #cf1a1a; color: #cf1a1a; }
.dot { width: 20px; height: 20px; border-radius: 50%; background: #f00; border: 1px solid #fff; margin: 10px 0 0 6px; flex: none; }

.watermark { position: absolute; left: 876px; top: 543px; width: 204px; height: 66px; pointer-events: none; }
.wm-cn { font-size: 18.500px; font-weight: 700; fill: #e8872a; letter-spacing: .3px; }
.wm-en { font: 15.500px "Liberation Sans", sans-serif; fill: #1f9fe8; letter-spacing: 1.300px; }
```
